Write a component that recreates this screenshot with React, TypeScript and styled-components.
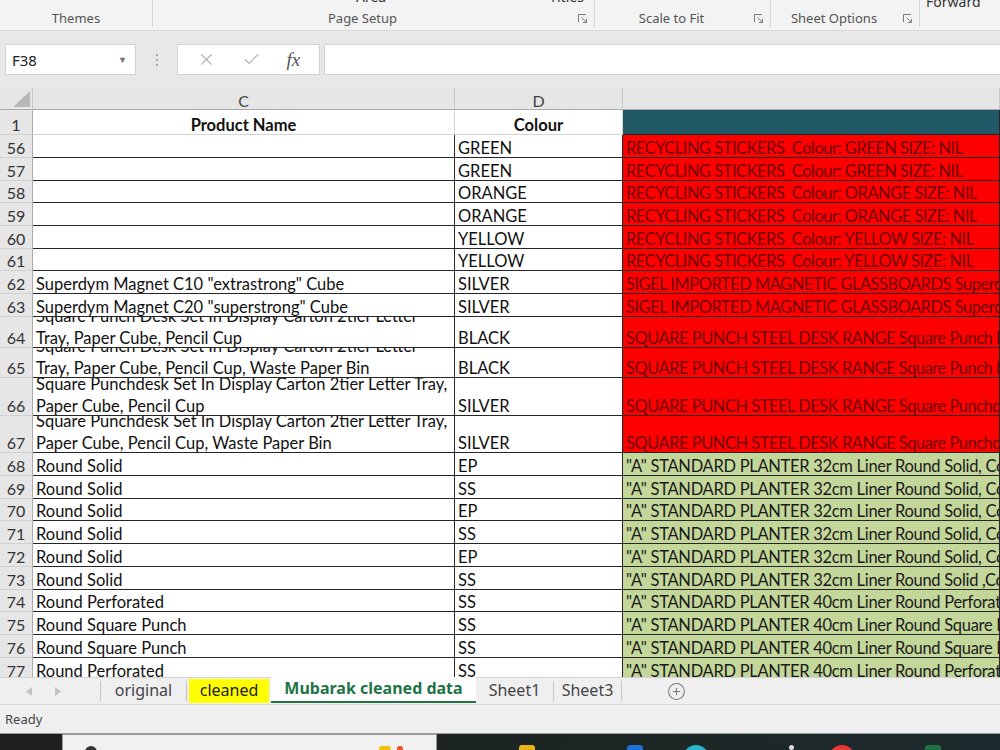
import React from 'react';
import styled, { createGlobalStyle, css } from 'styled-components';
import { X, Check, CirclePlus } from 'lucide-react';

const GlobalStyle = createGlobalStyle`
  html, body {
    margin: 0;
    padding: 0;
    width: 1000px;
    height: 750px;
    overflow: hidden;
    background: #e8e8e8;
  }
  #root {
    height: 750px;
  }
`;

const Window = styled.div`
  display: flex;
  flex-direction: column;
  width: 1000px;
  height: 750px;
  overflow: hidden;
  background: #e8e8e8;
  font-family: 'Noto Sans', 'Open Sans', sans-serif;
`;

/* ribbon */

const Ribbon = styled.div`
  display: flex;
  height: 30px;
  background: #f3f3f3;
  border-bottom: 1px solid #d9d9d9;
  flex-shrink: 0;
`;

const Group = styled.div<{ $w?: number }>`
  display: flex;
  flex-direction: column;
  width: ${(p) => (p.$w ? `${p.$w}px` : 'auto')};
  flex: ${(p) => (p.$w ? '0 0 auto' : '1')};
  border-right: ${(p) => (p.$w ? '1px solid #d6d6d6' : 'none')};
  margin-bottom: 3px;
`;

const GroupTop = styled.div`
  display: flex;
  align-items: flex-end;
  height: 8px;
  overflow: hidden;
`;

const TopText = styled.span<{ $left: number }>`
  margin-left: ${(p) => p.$left}px;
  font-size: 14px;
  line-height: 14px;
  color: #333;
  white-space: nowrap;
  transform: translateY(1px);
`;

const ThemeBox = styled.span<{ $left: number }>`
  margin-left: ${(p) => p.$left}px;
  width: 20px;
  height: 12px;
  border: 1px solid #8a8a8a;
  transform: translateY(-6px);
`;

const GroupLabel = styled.div<{ $launcher?: boolean }>`
  position: relative;
  display: flex;
  align-items: center;
  justify-content: center;
  flex: 1;
  padding-top: 6px;
  padding-right: ${(p) => (p.$launcher ? 22 : 0)}px;
  font-size: 13px;
  color: #555;
`;

const Launcher = styled.svg`
  position: absolute;
  right: 7px;
  top: 11px;
`;

const DialogLauncher = () => (
  <Launcher width="9" height="9" viewBox="0 0 9 9" fill="none" stroke="#7a7a7a" strokeWidth="1">
    <path d="M0.5 8V0.5H8" />
    <path d="M3.5 3.5L8 8M8.5 5V8.5H5" />
  </Launcher>
);

/* formula bar */

const FormulaArea = styled.div`
  display: flex;
  align-items: stretch;
  height: 31px;
  margin-top: 13px;
  padding-left: 5px;
  flex-shrink: 0;
`;

const NameBox = styled.div`
  display: flex;
  align-items: center;
  justify-content: space-between;
  box-sizing: border-box;
  width: 131px;
  padding: 0 8px 0 6px;
  background: #fff;
  border: 1px solid #d4d4d4;
  font-size: 15px;
  color: #222;
`;

const Caret = styled.span`
  font-size: 9px;
  color: #777;
`;

const Dots = styled.div`
  display: flex;
  flex-direction: column;
  justify-content: center;
  gap: 3px;
  width: 41px;
  align-items: center;
  span {
    width: 2px;
    height: 2px;
    background: #a8a8a8;
  }
`;

const FxBox = styled.div`
  display: flex;
  align-items: center;
  justify-content: space-around;
  box-sizing: border-box;
  width: 143px;
  padding: 0 6px;
  background: #fff;
  border: 1px solid #d4d4d4;
  color: #b0b0b0;
`;

const Fx = styled.span`
  font-family: 'Liberation Serif', serif;
  font-style: italic;
  font-size: 19px;
  color: #555;
`;

const FormulaInput = styled.div`
  flex: 1;
  margin-left: 4px;
  background: #fff;
  border: 1px solid #d4d4d4;
  border-right: none;
`;

/* grid */

const Sheet = styled.div`
  margin-top: 13px;
  height: 589px;
  overflow: hidden;
  background: #fff;
  flex-shrink: 0;
  font-family: Lato, 'Noto Sans', sans-serif;
`;

const Row = styled.div<{ $h: number }>`
  display: grid;
  grid-template-columns: 33px 422px 168px 1fr;
  grid-template-rows: ${(p) => p.$h}px;
  height: ${(p) => p.$h}px;
  overflow: hidden;
`;

const ColHead = styled.div`
  display: flex;
  align-items: center;
  justify-content: center;
  box-sizing: border-box;
  min-height: 0;
  padding-top: 3px;
  background: #e6e6e6;
  border-right: 1px solid #c6c6c6;
  border-bottom: 1px solid #ababab;
  font-size: 16px;
  color: #444;
`;

const Corner = styled(ColHead)`
  align-items: flex-end;
  justify-content: flex-end;
  padding: 0 2px 2px 0;
`;

const RowHead = styled.div`
  display: flex;
  align-items: flex-end;
  justify-content: center;
  box-sizing: border-box;
  min-height: 0;
  overflow: hidden;
  background: #e6e6e6;
  border-right: 1px solid #ababab;
  border-bottom: 1px solid #d0d0d0;
  font-size: 16px;
  line-height: 18px;
  color: #333;
`;

const fills = {
  none: css`
    background: #fff;
    color: #111;
  `,
  head: css`
    background: #fff;
    color: #111;
    border-color: #d4d4d4;
  `,
  red: css`
    background: #ff0000;
    color: #6e0000;
    letter-spacing: -0.5px;
  `,
  green: css`
    background: #c4d79b;
    color: #1a1a1a;
    letter-spacing: -0.3px;
  `,
  teal: css`
    background: #215967;
  `,
};

type Fill = keyof typeof fills;

const Cell = styled.div<{ $fill?: Fill; $center?: boolean; $bold?: boolean }>`
  display: flex;
  flex-direction: column;
  justify-content: flex-end;
  align-items: ${(p) => (p.$center ? 'center' : 'flex-start')};
  box-sizing: border-box;
  min-height: 0;
  overflow: hidden;
  padding-left: ${(p) => (p.$center ? 0 : 3)}px;
  border-right: 1px solid #262626;
  border-bottom: 1px solid #262626;
  font-size: 16.5px;
  font-weight: ${(p) => (p.$bold ? 700 : 400)};
  line-height: 22px;
  white-space: pre;
  ${(p) => fills[p.$fill ?? 'none']}
`;

const Line = styled.span`
  display: block;
  transform: translateY(2px);
`;

/* tabs + status */

const TabBar = styled.div`
  display: flex;
  align-items: stretch;
  height: 26px;
  background: #efefef;
  border-top: 1px solid #d4d4d4;
  flex-shrink: 0;
  font-size: 16px;
  color: #444;
`;

const Nav = styled.div`
  display: flex;
  align-items: center;
  gap: 23px;
  width: 101px;
  padding-left: 26px;
  box-sizing: border-box;
  border-right: 1px solid #c4c4c4;
  margin: 3px 0;
`;

const Tab = styled.div<{ $active?: boolean; $yellow?: boolean; $w: number }>`
  display: flex;
  align-items: center;
  justify-content: center;
  width: ${(p) => p.$w}px;
  box-sizing: border-box;
  border-right: 1px solid #c4c4c4;
  margin: 3px 0;
  padding-bottom: 2px;
  ${(p) =>
    p.$yellow &&
    css`
      background: #ffff00;
      color: #222;
      margin: 1px 2px 1px 2px;
      border-right: none;
    `}
  ${(p) =>
    p.$active &&
    css`
      background: #fff;
      color: #217346;
      font-weight: 700;
      margin: -1px 0 1px 0;
      border-right: none;
      border-bottom: 2px solid #217346;
    `}
`;

const AddSheet = styled.div`
  display: flex;
  align-items: center;
  margin-left: 45px;
  color: #7a7a7a;
`;

const StatusBar = styled.div`
  display: flex;
  align-items: center;
  height: 28px;
  padding-left: 5px;
  border-top: 1px solid #d8d8d8;
  border-bottom: 1px solid #9a9a9a;
  background: #efefef;
  font-size: 13px;
  color: #444;
  flex-shrink: 0;
`;

/* taskbar */

const Taskbar = styled.div`
  display: flex;
  flex: 1;
  background: linear-gradient(90deg, #1e1e1e 0%, #1c2624 60%, #1d2a2d 100%);
  overflow: hidden;
`;

const Search = styled.div`
  display: flex;
  align-items: flex-start;
  width: 375px;
  margin-left: 62px;
  box-sizing: border-box;
  background: #f1f1f1;
  border: 1px solid #9a9a9a;
  border-bottom: none;
  padding-left: 22px;
`;

const Glyph = styled.span<{ $c: string; $left: number; $round?: boolean; $size?: number }>`
  width: ${(p) => p.$size ?? 16}px;
  height: ${(p) => p.$size ?? 16}px;
  margin-left: ${(p) => p.$left}px;
  margin-top: 11px;
  background: ${(p) => p.$c};
  border-radius: ${(p) => (p.$round ? '50%' : '3px')};
  flex-shrink: 0;
`;

const Arrow = ({ dir }: { dir: 'l' | 'r' }) => (
  <svg width="6" height="9" viewBox="0 0 6 9">
    <polygon points={dir === 'l' ? '6,0 0,4.5 6,9' : '0,0 6,4.5 0,9'} fill="#c4c4c4" />
  </svg>
);

type DataRow = {
  n: number;
  h: number;
  c: string[];
  d: string;
  e: string;
  fill: Fill;
};

const r = (n: number, h: number, c: string | string[], d: string, e: string, fill: Fill): DataRow => ({
  n,
  h,
  c: Array.isArray(c) ? c : [c],
  d,
  e,
  fill,
});

const sticker = (c: string) => `RECYCLING STICKERS  Colour: ${c} SIZE: NIL`;
const planter32 = (c: string) => `"A" STANDARD PLANTER 32cm Liner Round Solid, Colour: ${c}`;

const rows: DataRow[] = [
  r(56, 23, '', 'GREEN', sticker('GREEN'), 'red'),
  r(57, 23, '', 'GREEN', sticker('GREEN'), 'red'),
  r(58, 22, '', 'ORANGE', sticker('ORANGE'), 'red'),
  r(59, 23, '', 'ORANGE', sticker('ORANGE'), 'red'),
  r(60, 23, '', 'YELLOW', sticker('YELLOW'), 'red'),
  r(61, 22, '', 'YELLOW', sticker('YELLOW'), 'red'),
  r(62, 23, 'Superdym Magnet C10 "extrastrong" Cube', 'SILVER', 'SIGEL IMPORTED MAGNETIC GLASSBOARDS Superdym Magnet C10', 'red'),
  r(63, 23, 'Superdym Magnet C20 "superstrong" Cube', 'SILVER', 'SIGEL IMPORTED MAGNETIC GLASSBOARDS Superdym Magnet C20', 'red'),
  r(64, 31, ['Square Punch Desk Set In Display Carton 2tier Letter', 'Tray, Paper Cube, Pencil Cup'], 'BLACK', 'SQUARE PUNCH STEEL DESK RANGE Square Punch Desk Set', 'red'),
  r(65, 30, ['Square Punch Desk Set In Display Carton 2tier Letter', 'Tray, Paper Cube, Pencil Cup, Waste Paper Bin'], 'BLACK', 'SQUARE PUNCH STEEL DESK RANGE Square Punch Desk Set', 'red'),
  r(66, 38, ['Square Punchdesk Set In Display Carton 2tier Letter Tray,', 'Paper Cube, Pencil Cup'], 'SILVER', 'SQUARE PUNCH STEEL DESK RANGE Square Punchdesk Set', 'red'),
  r(67, 37, ['Square Punchdesk Set In Display Carton 2tier Letter Tray,', 'Paper Cube, Pencil Cup, Waste Paper Bin'], 'SILVER', 'SQUARE PUNCH STEEL DESK RANGE Square Punchdesk Set', 'red'),
  r(68, 23, 'Round Solid', 'EP', planter32('EP'), 'green'),
  r(69, 23, 'Round Solid', 'SS', planter32('SS'), 'green'),
  r(70, 22, 'Round Solid', 'EP', planter32('EP'), 'green'),
  r(71, 23, 'Round Solid', 'SS', planter32('SS'), 'green'),
  r(72, 23, 'Round Solid', 'EP', planter32('EP'), 'green'),
  r(73, 23, 'Round Solid', 'SS', '"A" STANDARD PLANTER 32cm Liner Round Solid ,Colour: SS', 'green'),
  r(74, 22, 'Round Perforated', 'SS', '"A" STANDARD PLANTER 40cm Liner Round Perforated', 'green'),
  r(75, 23, 'Round Square Punch', 'SS', '"A" STANDARD PLANTER 40cm Liner Round Square Punch', 'green'),
  r(76, 23, 'Round Square Punch', 'SS', '"A" STANDARD PLANTER 40cm Liner Round Square Punch', 'green'),
  r(77, 23, 'Round Perforated', 'SS', '"A" STANDARD PLANTER 40cm Liner Round Perforated', 'green'),
];

const App = () => {
  return (
    <Window>
      <GlobalStyle />
      <Ribbon>
        <Group $w={152}>
          <GroupTop>
            <ThemeBox $left={62} />
          </GroupTop>
          <GroupLabel>Themes</GroupLabel>
        </Group>
        <Group $w={441}>
          <GroupTop>
            <TopText $left={203}>Area</TopText>
            <TopText $left={163}>Titles</TopText>
          </GroupTop>
          <GroupLabel $launcher>
            Page Setup
            <DialogLauncher />
          </GroupLabel>
        </Group>
        <Group $w={175}>
          <GroupTop />
          <GroupLabel $launcher>
            Scale to Fit
            <DialogLauncher />
          </GroupLabel>
        </Group>
        <Group $w={148}>
          <GroupTop />
          <GroupLabel $launcher>
            Sheet Options
            <DialogLauncher />
          </GroupLabel>
        </Group>
        <Group>
          <GroupTop>
            <TopText $left={6}>Forward</TopText>
            <TopText $left={20}>B</TopText>
          </GroupTop>
          <GroupLabel />
        </Group>
      </Ribbon>

      <FormulaArea>
        <NameBox>
          F38
          <Caret>▼</Caret>
        </NameBox>
        <Dots>
          <span />
          <span />
          <span />
        </Dots>
        <FxBox>
          <X size={19} strokeWidth={1.4} />
          <Check size={19} strokeWidth={1.4} />
          <Fx>fx</Fx>
        </FxBox>
        <FormulaInput />
      </FormulaArea>

      <Sheet>
        <Row $h={22}>
          <Corner>
            <svg width="17" height="16" viewBox="0 0 17 16">
              <polygon points="17,0 17,16 0,16" fill="#b8b8b8" />
            </svg>
          </Corner>
          <ColHead>C</ColHead>
          <ColHead>D</ColHead>
          <ColHead />
        </Row>
        <Row $h={25}>
          <RowHead>1</RowHead>
          <Cell $fill="head" $center $bold>
            <Line>Product Name</Line>
          </Cell>
          <Cell $fill="head" $center $bold>
            <Line>Colour</Line>
          </Cell>
          <Cell $fill="teal" />
        </Row>
        {rows.map((row) => (
          <Row key={row.n} $h={row.h}>
            <RowHead>{row.n}</RowHead>
            <Cell>
              {row.c.map((line, i) => (
                <Line key={i}>{line}</Line>
              ))}
            </Cell>
            <Cell>
              <Line>{row.d}</Line>
            </Cell>
            <Cell $fill={row.fill}>
              <Line>{row.e}</Line>
            </Cell>
          </Row>
        ))}
      </Sheet>

      <TabBar>
        <Nav>
          <Arrow dir="l" />
          <Arrow dir="r" />
        </Nav>
        <Tab $w={86}>original</Tab>
        <Tab $w={80} $yellow>
          cleaned
        </Tab>
        <Tab $w={205} $active>
          Mubarak cleaned data
        </Tab>
        <Tab $w={78}>Sheet1</Tab>
        <Tab $w={68}>Sheet3</Tab>
        <AddSheet>
          <CirclePlus size={19} strokeWidth={1.3} />
        </AddSheet>
      </TabBar>

      <StatusBar>Ready</StatusBar>

      <Taskbar>
        <Search>
          <Glyph $c="#333" $left={0} $round $size={12} />
          <Glyph $c="#f4c20d" $left={282} $size={12} />
          <Glyph $c="#f25022" $left={6} $round $size={6} />
        </Search>
        <Glyph $c="#e8b418" $left={82} />
        <Glyph $c="#1f6fd8" $left={92} />
        <Glyph $c="#27b3c9" $left={40} $round $size={26} />
        <Glyph $c="#dddddd" $left={80} $round $size={5} />
        <Glyph $c="#e53935" $left={35} $round $size={26} />
        <Glyph $c="#1e7145" $left={70} />
      </Taskbar>
    </Window>
  );
};

export default App;
